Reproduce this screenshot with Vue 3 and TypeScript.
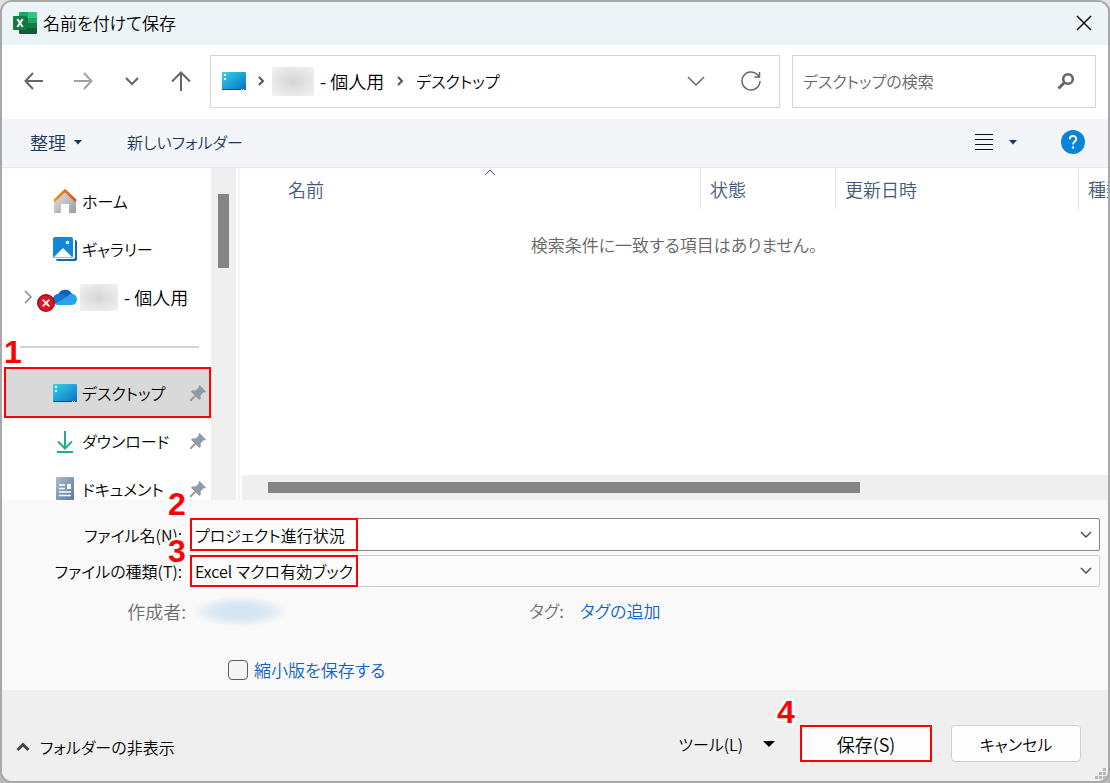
<script setup lang="ts">
import { ref } from 'vue'

interface Column {
  key: string
  label: string
  sorted?: boolean
}

const columns: Column[] = [
  { key: 'name', label: '名前', sorted: true },
  { key: 'status', label: '状態' },
  { key: 'date', label: '更新日時' },
  { key: 'kind', label: '種類' },
]

const pinned = [
  { id: 'desktop', label: 'デスクトップ', selected: true },
  { id: 'download', label: 'ダウンロード', selected: false },
  { id: 'document', label: 'ドキュメント', selected: false },
]

const fileName = ref('プロジェクト進行状況')
const fileType = ref('Excel マクロ有効ブック')
const search = ref('')
const thumbnail = ref(false)
</script>

<template>
  <div class="backdrop">
    <main class="dialog">
      <header class="titlebar">
        <svg class="app-icon" width="24" height="22" viewBox="0 0 24 22" aria-hidden="true">
          <path fill="#21a366" d="M6 1a1 1 0 0 1 1-1h8v6H6z" />
          <path fill="#33c481" d="M15 0h8a1 1 0 0 1 1 1v5h-9z" />
          <path fill="#107c41" d="M6 6h9v10H6z" />
          <path fill="#21a366" d="M15 6h9v5h-9z" />
          <path fill="#107c41" d="M15 11h9v5h-9z" />
          <path fill="#185c37" d="M6 16h18v5a1 1 0 0 1-1 1H7a1 1 0 0 1-1-1z" />
          <rect y="4" width="14" height="14" rx="1" fill="#107c41" />
          <path stroke="#fff" stroke-width="2" d="M4.300 7 9.700 15M9.700 7 4.300 15" />
        </svg>
        <h1>名前を付けて保存</h1>
        <button class="close" type="button" aria-label="閉じる">
          <svg width="16" height="16" viewBox="0 0 16 16"><path d="M1 1l14 14M15 1L1 15" stroke="#111" stroke-width="1.500" /></svg>
        </button>
      </header>

      <nav class="navbar" aria-label="場所">
        <div class="history">
          <button type="button" aria-label="戻る">
            <svg width="20" height="20" viewBox="0 0 20 20"><path d="M19 10H2M9 2 1.500 10 9 18" class="stroke" /></svg>
          </button>
          <button type="button" aria-label="進む" class="dim">
            <svg width="20" height="20" viewBox="0 0 20 20"><path d="M1 10h17M11 2l7.500 8L11 18" class="stroke" /></svg>
          </button>
          <button type="button" aria-label="最近の場所">
            <svg width="20" height="20" viewBox="0 0 20 20"><path d="m4 7 6 6 6-6" class="stroke" /></svg>
          </button>
          <button type="button" aria-label="上へ">
            <svg width="20" height="20" viewBox="0 0 20 20"><path d="M10 20V2M1 10.500 10 1.500l9 9" class="stroke" /></svg>
          </button>
        </div>
        <div class="address">
          <svg width="24" height="18" viewBox="0 0 24 18" aria-hidden="true">
            <defs>
              <linearGradient id="deskA" x1="0" y1="0" x2="1" y2="1">
                <stop offset="0" stop-color="#35d4e6" /><stop offset="1" stop-color="#0b6fc6" />
              </linearGradient>
            </defs>
            <rect width="24" height="18" rx="1" fill="url(#deskA)" />
            <path fill="#fff" d="M2 2h2v2H2zM2 6h2v2H2z" />
            <path fill="#0b4f8a" d="M0 17h24l-1 1H1z" />
            <path fill="#bfe6ff" d="M19 17h1v1h-1zM21 17h1v1h-1z" />
          </svg>
          <svg class="crumb-sep first" width="8" height="10" viewBox="0 0 8 10"><path d="m2 1 4 4-4 4" /></svg>
          <span class="redacted wide"></span>
          <a href="#" class="account">- 個人用</a>
          <svg class="crumb-sep" width="8" height="10" viewBox="0 0 8 10"><path d="m2 1 4 4-4 4" /></svg>
          <a href="#">デスクトップ</a>
          <button class="push" type="button" aria-label="履歴を表示">
            <svg width="18" height="12" viewBox="0 0 18 12"><path d="m1 2 8 8 8-8" class="thin" /></svg>
          </button>
          <button class="reload" type="button" aria-label="更新">
            <svg width="20" height="20" viewBox="0 0 20 20"><path d="M19 10a9 9 0 1 1-2.600-6.400L18 5.500M18.500 1v5H13.500" class="thin" /></svg>
          </button>
        </div>
        <label class="search">
          <input v-model="search" type="text" placeholder="デスクトップの検索" aria-label="デスクトップの検索" />
          <svg width="18" height="18" viewBox="0 0 18 18"><circle cx="11" cy="7" r="4.800" fill="none" stroke="#666" stroke-width="2.600" /><path d="m7.500 10.500-6 6" stroke="#666" stroke-width="3" /></svg>
        </label>
      </nav>

      <div class="toolbar">
        <button class="organize" type="button">整理 <svg width="8" height="5" viewBox="0 0 8 5"><path d="M0 0h8L4 4.500z" fill="#1b365d" /></svg></button>
        <button class="new-folder" type="button">新しいフォルダー</button>
        <button class="view" type="button" aria-label="表示の変更">
          <svg width="18" height="18" viewBox="0 0 18 18"><path d="M0 1.500h18M0 6.500h18M0 11.500h18M0 16.500h18" stroke="#111" /></svg>
          <svg width="8" height="5" viewBox="0 0 8 5"><path d="M0 0h8L4 4.500z" fill="#1b365d" /></svg>
        </button>
        <button class="help" type="button" aria-label="ヘルプ">
          <svg width="24" height="24" viewBox="0 0 24 24"><circle cx="12" cy="12" r="12" fill="#0a84d8" /><path d="M8.800 9.200c0-4.300 6.500-4.100 6.500-.3 0 2.600-3.300 2.700-3.300 5.600" fill="none" stroke="#fff" stroke-width="1.800" /><circle cx="12" cy="17.500" r="1.200" fill="#fff" /></svg>
        </button>
      </div>

      <section class="browser">
        <aside class="sidebar">
          <ul>
            <li>
              <a href="#">
                <svg class="icon" width="24" height="24" viewBox="0 0 24 24">
                  <defs>
                    <linearGradient id="wall" x1="0" y1="0" x2="1" y2="1"><stop offset="0" stop-color="#e4e4e4" /><stop offset="1" stop-color="#9c9c9c" /></linearGradient>
                    <linearGradient id="roof" x1="0" y1="0" x2="1" y2="0"><stop offset="0" stop-color="#f59b1c" /><stop offset="1" stop-color="#d84c14" /></linearGradient>
                  </defs>
                  <path fill="url(#wall)" d="M1 12 12 3l11 9v12h-7v-9H8v9H1z" />
                  <path d="m1 12 11-10.500L23 12" fill="none" stroke="url(#roof)" stroke-width="2.600" />
                </svg>
                ホーム
              </a>
            </li>
            <li>
              <a href="#">
                <svg class="icon" width="24" height="24" viewBox="0 0 24 24">
                  <rect x="3" y="3" width="21" height="21" rx="2" fill="#1664b4" />
                  <rect width="22" height="22" rx="2" fill="#fff" />
                  <rect width="20" height="21" rx="2" fill="#1388da" />
                  <path fill="#fff" d="m1 20 9-9 9 9-1 .6H2z" />
                  <circle cx="14.500" cy="5.500" r="1.700" fill="#fff" />
                </svg>
                ギャラリー
              </a>
            </li>
            <li class="cloud">
              <svg class="expander" width="8" height="14" viewBox="0 0 8 14"><path d="m1 1 6 6-6 6" fill="none" stroke="#888" stroke-width="1.500" /></svg>
              <a href="#" class="account">
                <span class="cloud-icon">
                  <svg class="icon" width="24" height="16" viewBox="0 0 24 16">
                    <path fill="#0f5fb8" d="M5 6a7.500 7.500 0 0 1 14-1l-7 5z" />
                    <path fill="#1277d3" d="M5.500 5C2 5 0 7.500 0 10.500c0 2 .8 3.500 2 4.500l14-6.500C12 6 9 4.600 5.500 5z" />
                    <path fill="#28a2ea" d="M2 15 15 7c1-1.500 2.500-2 4.200-2 3 0 4.800 2.500 4.800 5.300 0 3-2 5.700-5 5.700H5c-1 0-2-.3-3-1z" />
                  </svg>
                  <svg class="error" width="18" height="18" viewBox="0 0 18 18"><circle cx="9" cy="9" r="8.300" fill="#e81123" stroke="#9b0f1b" stroke-width="1.400" /><path d="m5.700 5.700 6.600 6.600M12.300 5.700l-6.600 6.600" stroke="#fff" stroke-width="1.800" /></svg>
                </span>
                <span class="redacted"></span>
                - 個人用
              </a>
            </li>
            <li class="divider" role="separator"></li>
            <li v-for="item in pinned" :key="item.id" :class="{ selected: item.selected }">
              <a href="#">
                <svg v-if="item.id === 'desktop'" class="icon" width="24" height="18" viewBox="0 0 24 18">
                  <rect width="24" height="18" rx="1" fill="url(#deskA)" />
                  <path fill="#fff" d="M2 2h2v2H2zM2 6h2v2H2z" />
                  <path fill="#0b4f8a" d="M0 17h24l-1 1H1z" />
                  <path fill="#bfe6ff" d="M19 17h1v1h-1zM21 17h1v1h-1z" />
                </svg>
                <svg v-else-if="item.id === 'download'" class="icon" width="24" height="24" viewBox="0 0 24 24">
                  <path d="M12 2v17M5 12.500l7 7 7-7M4 23h16" fill="none" stroke="#23ad8b" stroke-width="2" />
                </svg>
                <svg v-else class="icon" width="24" height="24" viewBox="0 0 24 24">
                  <defs><linearGradient id="doc" x1="0" y1="0" x2="1" y2="1"><stop offset="0" stop-color="#a9bdd2" /><stop offset="1" stop-color="#587899" /></linearGradient></defs>
                  <rect x="3" width="18" height="24" rx="1" fill="url(#doc)" />
                  <path d="M6 8h6M6 11.500h6M6 15h12M6 18.500h12" stroke="#fff" stroke-width="1.300" /><path fill="#fff" d="M14 7h4v5h-4z" />
                </svg>
                {{ item.label }}
                <svg class="pin" width="16" height="16" viewBox="0 0 16 16"><path fill="#8f9aa3" d="m9.500 0 6.500 6.500-1.500 1-1-.3-3 3.300.3 3-1.500 1.500-3.600-3.600L1.500 16H0v-1.500l4.600-4.200L1 6.700l1.500-1.500 3 .3 3.300-3-.3-1z" /></svg>
              </a>
              <span v-if="item.selected" class="frame"></span>
              <span v-if="item.selected" class="step step-1">1</span>
            </li>
          </ul>
        </aside>
        <div class="vscroll"><div class="vthumb"></div></div>
        <div class="list">
          <table>
            <thead>
              <tr>
                <th v-for="c in columns" :key="c.key" :class="c.key" scope="col">
                  {{ c.label }}
                  <svg v-if="c.sorted" class="sort" width="12" height="7" viewBox="0 0 12 7"><path d="m1 6 5-5 5 5" fill="none" stroke="#555" /></svg>
                </th>
              </tr>
            </thead>
            <tbody>
              <tr><td colspan="4">検索条件に一致する項目はありません。</td></tr>
            </tbody>
          </table>
          <div class="hscroll"><div class="hthumb"></div></div>
        </div>
      </section>

      <form class="fields" @submit.prevent>
        <div class="row">
          <label for="file-name">ファイル名(N):</label>
          <div class="combo name">
            <input id="file-name" v-model="fileName" type="text" />
            <svg width="12" height="8" viewBox="0 0 12 8"><path d="m1 1 5 5 5-5" /></svg>
            <span class="frame"></span>
            <span class="step step-2">2</span>
          </div>
        </div>
        <div class="row">
          <label for="file-type">ファイルの種類(T):</label>
          <div class="combo type">
            <select id="file-type" v-model="fileType"><option>Excel マクロ有効ブック</option></select>
            <svg width="12" height="8" viewBox="0 0 12 8"><path d="m1 1 5 5 5-5" /></svg>
            <span class="frame"></span>
            <span class="step step-3">3</span>
          </div>
        </div>
        <div class="meta">
          <div class="author"><span>作成者:</span><span class="author-name"></span></div>
          <div class="tags"><span>タグ:</span><a href="#">タグの追加</a></div>
        </div>
        <label class="thumb-option"><input v-model="thumbnail" type="checkbox" />縮小版を保存する</label>
      </form>

      <footer>
        <button class="hide-folders" type="button">
          <svg width="14" height="10" viewBox="0 0 14 10"><path d="m1.500 8 5.500-5.500L12.500 8" fill="none" stroke="#444" stroke-width="3" /></svg>
          フォルダーの非表示
        </button>
        <button class="tools" type="button">ツール(L) <svg width="12" height="6" viewBox="0 0 12 6"><path d="M0 0h12L6 6z" /></svg></button>
        <div class="save-wrap">
          <button class="save" type="button">保存(S)</button>
          <span class="step step-4">4</span>
        </div>
        <button class="cancel" type="button">キャンセル</button>
        <svg class="grip" width="12" height="12" viewBox="0 0 12 12"><path fill="#b5b5b5" d="M9 0h3v3H9zM5 4h3v3H5zM9 4h3v3H9zM1 8h3v3H1zM5 8h3v3H5zM9 8h3v3H9z" /></svg>
      </footer>
    </main>
  </div>
</template>

<style>
body {
  margin: 0;
}
</style>

<style scoped>
* {
  box-sizing: border-box;
}
.backdrop {
  height: 100vh;
  background: linear-gradient(#e2e2e2, #b8b8b8);
  font: 350 16px/24px "Noto Sans CJK JP", sans-serif;
  font-feature-settings: "palt";
  color: #000;
}
.dialog {
  height: 100%;
  display: flex;
  flex-direction: column;
  border: 2px solid #a8a8a8;
  border-radius: 12px;
  overflow: hidden;
  background: #fff;
}
button, input, select {
  font: inherit;
  font-feature-settings: inherit;
  color: inherit;
  background: none;
  border: 0;
  padding: 0;
  margin: 0;
  outline: 0;
}
a {
  color: inherit;
  text-decoration: none;
}
svg {
  display: block;
  flex: none;
}
button {
  display: flex;
  align-items: center;
  white-space: nowrap;
}
.stroke {
  fill: none;
  stroke: #666;
  stroke-width: 2;
}
.thin {
  fill: none;
  stroke: #666;
  stroke-width: 1.5;
}
.account, .organize, th, .author, .save {
  font-size: 18px;
}
h1, td, .tags, .thumb-option {
  font-size: 17px;
}
.titlebar {
  flex: none;
  height: 43px;
  display: flex;
  align-items: center;
  padding: 0 16px 2px 11px;
  gap: 6px;
  background: #ecf4f8;
}
h1 {
  margin: 0;
  font-weight: inherit;
}
.close {
  margin-left: auto;
}
.navbar {
  flex: none;
  height: 74px;
  display: flex;
  align-items: center;
  padding: 0 12px 2px 22px;
}
.history {
  display: flex;
  gap: 29px;
  width: 186px;
  flex: none;
}
.dim {
  opacity: 0.6;
}
.address {
  flex: 539;
  height: 53px;
  display: flex;
  align-items: center;
  border: 1px solid #d5d5d5;
  padding: 0 18px 0 11px;
  white-space: nowrap;
}
.crumb-sep {
  margin: 0 12px;
}
.crumb-sep.first {
  margin: 0 7px 0 11px;
}
.crumb-sep path {
  fill: none;
  stroke: #555;
  stroke-width: 2;
}
.redacted {
  flex: none;
  width: 38px;
  height: 27px;
  margin-right: 6px;
  background: radial-gradient(#d6d6d6, #f2f2f2);
}
.redacted.wide {
  width: 42px;
  height: 29px;
}
.push {
  margin-left: auto;
}
.reload {
  margin-left: 36px;
}
.search {
  flex: 272;
  height: 53px;
  display: flex;
  align-items: center;
  margin-left: 12px;
  padding: 0 20px 0 10px;
  border: 1px solid #d5d5d5;
}
.search input {
  flex: 1;
  min-width: 0;
}
.search input::placeholder {
  color: #666;
  opacity: 1;
}
.toolbar {
  flex: none;
  height: 49px;
  display: flex;
  align-items: center;
  padding: 0 23px 2px 28px;
  background: #f3f5f8;
  border-bottom: 1px solid #e8e8e8;
  color: #1b365d;
}
.toolbar button {
  gap: 8px;
}
.new-folder {
  margin-left: 45px;
}
.toolbar .view {
  margin-left: auto;
  gap: 16px;
}
.help {
  margin-left: 44px;
}
.browser {
  flex: 1;
  min-height: 0;
  display: flex;
  overflow: hidden;
}
.sidebar {
  flex: none;
  width: 209px;
}
ul {
  list-style: none;
  margin: 0;
  padding: 9px 0 0 2px;
}
li {
  position: relative;
  height: 48px;
}
li a {
  height: 100%;
  display: flex;
  align-items: center;
  padding: 0 5px 0 49px;
  white-space: nowrap;
}
.icon {
  margin-right: 5px;
}
.pin {
  margin-left: auto;
}
.expander {
  position: absolute;
  left: 20px;
  top: 17px;
}
.cloud-icon {
  position: relative;
}
.cloud-icon .icon {
  margin-right: 3px;
}
.error {
  position: absolute;
  left: -16px;
  top: 5px;
}
.divider::before {
  content: "";
  display: block;
  margin: 0 12px 0 16px;
  height: 25px;
  border-bottom: 2px solid #d2d2d2;
}
.selected {
  background: #d9d9d9;
}
.frame {
  position: absolute;
  inset: -2px 0 -1px;
  border: 2px solid #f00;
  pointer-events: none;
}
.step {
  position: absolute;
  font: bold 32px/32px "Liberation Sans", Arial, sans-serif;
  color: #f00;
  -webkit-text-stroke: 5px #fff;
  paint-order: stroke fill;
  pointer-events: none;
}
.step-1 {
  left: 0;
  top: -33px;
}
.step-2 {
  left: -23px;
  top: -31px;
}
.step-3 {
  left: -23px;
  top: -21px;
}
.step-4 {
  left: -23px;
  top: -29px;
}
.vscroll {
  flex: none;
  width: 25px;
  background: #efefef;
  padding: 26px 7px 0;
}
.vthumb {
  height: 74px;
  background: #858585;
}
.list {
  flex: 1;
  min-width: 0;
  margin-left: 2px;
  border-left: 2px solid #f3f3f3;
  display: flex;
  flex-direction: column;
  justify-content: space-between;
}
table {
  width: 100%;
  table-layout: fixed;
  border-collapse: separate;
  border-spacing: 0;
}
th {
  position: relative;
  height: 41px;
  padding: 0 0 0 9px;
  border-left: 1px solid #e3e3e3;
  text-align: left;
  font-weight: inherit;
  color: #44597a;
  white-space: nowrap;
  overflow: hidden;
}
th.name {
  padding-left: 48px;
  border: 0;
}
th.status {
  width: 135px;
}
th.date {
  width: 243px;
}
th.kind {
  width: 30px;
}
.sort {
  position: absolute;
  left: calc(50% + 14px);
  top: 1px;
}
td {
  height: 72px;
  padding: 0;
  text-align: center;
  color: #666;
}
.hscroll {
  height: 25px;
  margin-left: 2px;
  padding: 7px 0 7px 26px;
  background: #efefef;
}
.hthumb {
  width: 70.5%;
  height: 11px;
  background: #858585;
}
.fields {
  position: relative;
  flex: none;
  padding: 18px 8px 8px 0;
  background: #f9f9f9;
}
.row {
  display: flex;
  align-items: center;
  margin-bottom: 4px;
}
.row > label {
  flex: none;
  width: 180px;
  margin-right: 8px;
  text-align: right;
}
.combo {
  position: relative;
  flex: 1;
  height: 33px;
  display: flex;
  align-items: center;
  padding: 0 7px 0 4px;
  border: 1px solid #868686;
  border-radius: 2px;
  background: #fff;
}
.combo.type {
  height: 32px;
  border-color: #ccc;
  background: #fcfcfc;
}
.combo input, .combo select {
  flex: 1;
  min-width: 0;
  height: 100%;
  appearance: none;
}
.combo path {
  fill: none;
  stroke: #444;
  stroke-width: 1.3;
}
.combo .frame {
  inset: -1px auto -1px -1px;
  width: 168px;
}
.meta {
  display: flex;
  height: 40px;
  align-items: center;
  color: #6d6d6d;
}
.author {
  width: 527px;
  display: flex;
  align-items: center;
}
.author > span:first-child {
  width: 184px;
  text-align: right;
}
.author-name {
  width: 96px;
  height: 31px;
  margin-left: 6px;
  background: radial-gradient(closest-side, #d3e2f3, #d9e6f4 50%, #f9f9f9);
}
.tags {
  display: flex;
  gap: 16px;
}
.tags a, .thumb-option {
  color: #0a63c9;
}
.thumb-option {
  display: flex;
  align-items: center;
  width: max-content;
  margin: 27px 0 0 226px;
  gap: 6px;
}
.thumb-option input {
  appearance: none;
  width: 20px;
  height: 20px;
  border: 1px solid #5d5d5d;
  border-radius: 4px;
  background: #f5f5f5;
}
footer {
  position: relative;
  flex: none;
  display: flex;
  align-items: flex-end;
  padding: 35px 27px 19px 14px;
  background: #efefef;
}
.hide-folders {
  height: 30px;
  gap: 10px;
}
.tools {
  height: 37px;
  margin-left: auto;
  gap: 20px;
}
.save-wrap {
  position: relative;
  margin: 0 19px 0 25px;
}
.save, .cancel {
  justify-content: center;
  width: 132px;
  height: 37px;
  background: #fdfdfd;
}
.save {
  border: 2px solid #f00;
}
.cancel {
  width: 130px;
  border: 1px solid #cfcfcf;
  border-radius: 4px;
}
.grip {
  position: absolute;
  right: 2px;
  bottom: 1px;
}
</style>
